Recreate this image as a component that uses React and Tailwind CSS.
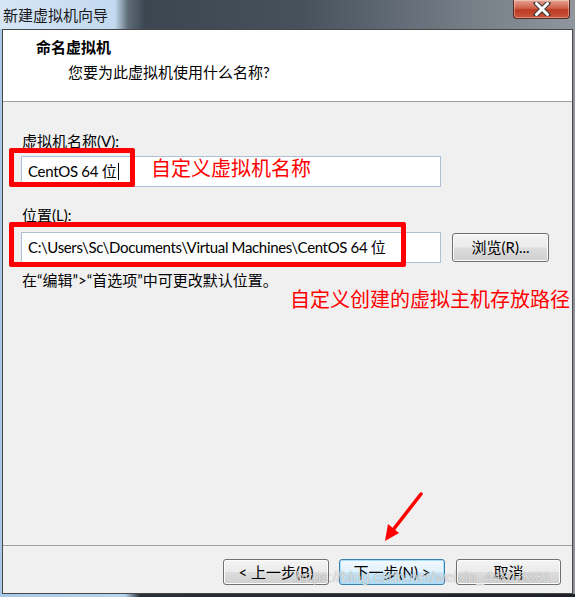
import React from "react";

const ui = "font-['Lato','Noto_Sans_CJK_SC',sans-serif]";

const WinButton = ({ children, focused, className = "" }) => (
  <button
    className={`h-[26px] rounded-[3px] border text-[15px] leading-none text-black ${
      focused
        ? "border-[#3c7fb1] bg-[linear-gradient(180deg,#f2f9fe_0%,#e3f2fc_48%,#c9e7fa_52%,#b6dcf6_100%)] shadow-[inset_0_0_0_1px_#a8e0fb]"
        : "border-[#707070] bg-[linear-gradient(180deg,#f4f4f4_0%,#ebebeb_48%,#dddddd_52%,#cfcfcf_100%)] shadow-[inset_0_0_0_1px_#fcfcfc]"
    } ${className}`}
  >
    {children}
  </button>
);

export default function App() {
  return (
    <div className={`w-[575px] h-[597px] flex flex-col overflow-hidden relative ${ui}`}>
      {/* title bar */}
      <div className="h-[29px] shrink-0 relative flex items-center bg-[linear-gradient(90deg,#d6e6f6_0px,#c3d9ef_115px,#5f6c78_128px,#3b4651_145px,#46515c_300px,#6e7780_440px,#8f969c_575px)]">
        <span className="pl-[3px] text-[15px] leading-none text-[#1a1a1a] font-['Noto_Sans_CJK_SC',sans-serif]">
          新建虚拟机向导
        </span>
        <div className="absolute left-[513px] top-0 w-[57px] h-[19px] rounded-b-[4px] border border-t-0 border-[#5a2a22] bg-[linear-gradient(180deg,#e5a493_0%,#d0614b_45%,#bc3a22_55%,#c9553a_100%)] flex items-center justify-center shadow-[inset_0_0_0_1px_rgba(255,255,255,0.35)]">
          <svg width="18" height="14" viewBox="0 0 18 14">
            <path d="M3 1 L15 13 M15 1 L3 13" stroke="#3a3a3a" strokeWidth="5" strokeLinecap="round" />
            <path d="M3.5 1.5 L14.5 12.5 M14.5 1.5 L3.5 12.5" stroke="#ffffff" strokeWidth="3" strokeLinecap="round" />
          </svg>
        </div>
      </div>

      {/* window body */}
      <div className="flex-1 flex">
        <div className="w-[2px] bg-[#a9c8e8]" />
        <div className="flex-1 border border-[#474747] flex flex-col bg-[#f0f0f0]">
          {/* header */}
          <div className="h-[72px] bg-white border-b border-[#a0a0a0] pt-[7px]">
            <div className="pl-[33px] text-[15px] leading-[20px] font-bold text-black">命名虚拟机</div>
            <div className="pl-[65px] mt-[5px] text-[15px] leading-[20px] text-black">您要为此虚拟机使用什么名称?</div>
          </div>

          {/* body */}
          <div className="flex-1 pl-[18px] pt-[29px] text-[15px] text-black">
            <div className="pl-[1px] leading-[20px]">虚拟机名称(V):</div>
            <div className="mt-[5px] w-[420px] h-[31px] bg-white border border-[#abc1d8] flex items-center pl-[6px]">
              <span className="leading-none tracking-[-0.3px]">CentOS 64 位</span>
              <span className="ml-[2px] w-px h-[17px] bg-black" />
            </div>

            <div className="mt-[18px] pl-[1px] leading-[20px]">位置(L):</div>
            <div className="mt-[7px] flex items-center">
              <div className="w-[420px] h-[31px] bg-white border border-[#abc1d8] flex items-center pl-[6px]">
                <span className="leading-none whitespace-nowrap tracking-[-0.35px]">C:\Users\Sc\Documents\Virtual Machines\CentOS 64 位</span>
              </div>
              <WinButton className="ml-[11px] w-[97px] h-[29px]">浏览(R)...</WinButton>
            </div>
            <div className="mt-[7px] pl-[1px] leading-[20px]">在“编辑”&gt;“首选项”中可更改默认位置。</div>
          </div>

          {/* footer */}
          <div className="h-[48px] border-t border-[#a0a0a0] flex justify-end items-start pt-[13px] pr-[11px] gap-[10px]">
            <WinButton className="w-[106px]">&lt; 上一步(B)</WinButton>
            <WinButton focused className="w-[106px] mr-[1px]">下一步(N) &gt;</WinButton>
            <WinButton className="w-[105px]">取消</WinButton>
          </div>
        </div>
        <div className="w-[2px] bg-[#8d9399]" />
      </div>
      <div className="h-[3px] shrink-0 bg-[linear-gradient(90deg,#a9c8e8_0px,#b8d4ee_125px,#2a2f35_140px,#1e2226_575px)]" />

      {/* annotations */}
      <div className="absolute left-[9px] top-[148px] w-[126px] h-[39px] border-[5px] border-[#ff0000] rounded-[2px]" />
      <div className="absolute left-[151px] top-[156px] text-[20px] leading-[24px] text-[#ff0000] font-['Noto_Sans_CJK_SC',sans-serif]">
        自定义虚拟机名称
      </div>
      <div className="absolute left-[9px] top-[222px] w-[397px] h-[45px] border-[5px] border-[#ff0000] rounded-[2px]" />
      <div className="absolute left-[290px] top-[287px] text-[20px] leading-[24px] text-[#ff0000] font-['Noto_Sans_CJK_SC',sans-serif]">
        自定义创建的虚拟主机存放路径
      </div>
      <svg className="absolute left-[375px] top-[488px]" width="55" height="60" viewBox="0 0 55 60">
        <path d="M46 6 L18 42" stroke="#ff0000" strokeWidth="3.5" strokeLinecap="round" />
        <path d="M10 53 L13 36 L24 45 Z" fill="#ff0000" />
      </svg>
      <div className="absolute left-[296px] top-[567px] text-[15px] leading-[20px] text-white/75 font-['Liberation_Sans',sans-serif] [text-shadow:0_0_1px_rgba(0,0,0,0.45)] pointer-events-none">
        https://blog.csdn.net/weixin_44816331
      </div>
    </div>
  );
}
